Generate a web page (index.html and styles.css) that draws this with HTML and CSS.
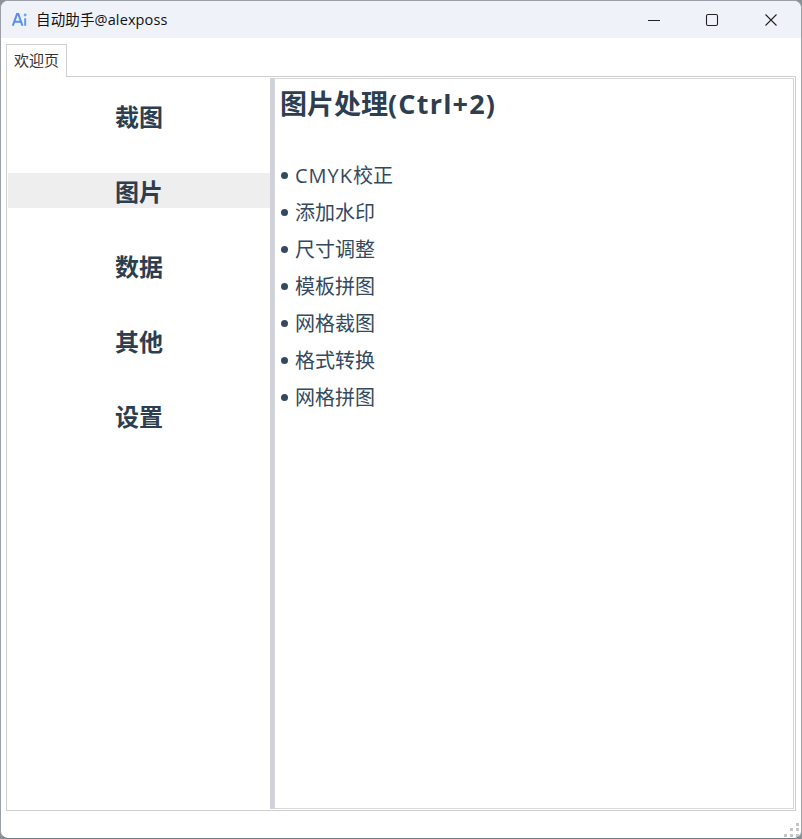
FILE: index.html
```html
<!DOCTYPE html>
<html lang="zh-CN">
<head>
<meta charset="utf-8">
<title>自动助手@alexposs</title>
<link rel="stylesheet" href="styles.css">
</head>
<body>
<div class="window">
  <header class="titlebar">
    <svg class="logo" width="15" height="15" viewBox="0 0 18 18" fill="none">
      <path d="M1 16.5 L6 2.5 L7.6 2.5 L12.6 16.5 M3 11.8 H10.6" stroke="#5b8def" stroke-width="2.4"/>
      <path d="M15.8 7.5 V16.5" stroke="#5b9cf0" stroke-width="2.4"/>
      <circle cx="15.8" cy="3.6" r="1.7" fill="#6aa5f5"/>
    </svg>
    <span class="app-title">自动助手@alexposs</span>
    <div class="controls">
      <button class="ctl"><svg width="14" height="14" viewBox="0 0 14 14"><path d="M1 7.5H13" stroke="#222" stroke-width="1"/></svg></button>
      <button class="ctl"><svg width="14" height="14" viewBox="0 0 14 14" fill="none"><rect x="1.5" y="1.5" width="11" height="11" rx="1.5" stroke="#222" stroke-width="1.1"/></svg></button>
      <button class="ctl"><svg width="14" height="14" viewBox="0 0 14 14"><path d="M1.5 1.5L12.5 12.5M12.5 1.5L1.5 12.5" stroke="#222" stroke-width="1.1"/></svg></button>
    </div>
  </header>
  <div class="tabbar"><div class="tab">欢迎页</div></div>
  <div class="pane">
    <nav class="sidebar">
      <div class="nav-item">裁图</div>
      <div class="nav-item active">图片</div>
      <div class="nav-item">数据</div>
      <div class="nav-item">其他</div>
      <div class="nav-item">设置</div>
    </nav>
    <div class="splitter"></div>
    <main class="content">
      <h1 class="heading">图片处理<span class="wide">(Ctrl+2)</span></h1>
      <ul class="features">
        <li><span><span class="wide-sm">CMYK</span>校正</span></li>
        <li>添加水印</li>
        <li>尺寸调整</li>
        <li>模板拼图</li>
        <li>网格裁图</li>
        <li>格式转换</li>
        <li>网格拼图</li>
      </ul>
    </main>
  </div>
  <div class="statusbar">
    <svg class="grip" width="16" height="16" viewBox="0 0 16 16" fill="#c4c4c4">
      <rect x="12" y="2" width="3" height="3"/>
      <rect x="6" y="7" width="3" height="3"/><rect x="12" y="7" width="3" height="3"/>
      <rect x="0" y="13" width="3" height="3"/><rect x="6" y="13" width="3" height="3"/><rect x="12" y="13" width="3" height="3"/>
    </svg>
  </div>
</div>
</body>
</html>
```
FILE: styles.css
```css
* { box-sizing: border-box; }
html, body { margin: 0; padding: 0; height: 100%; }
body {
  background: #8a9296;
  font-family: "Open Sans", "Noto Sans CJK SC", sans-serif;
  overflow: hidden;
}
.window {
  width: 802px;
  height: 839px;
  display: flex;
  flex-direction: column;
  background: #fff;
  border-radius: 8px;
  border: 1px solid #9aa0a6;
  border-bottom-color: #6d7b80;
  overflow: hidden;
}
.titlebar {
  height: 37px;
  flex: none;
  display: flex;
  align-items: center;
  background: #eff2f8;
  padding-left: 11px;
}
.logo { flex: none; }
.app-title {
  margin-left: 9px;
  padding-bottom: 3px;
  font-size: 14.5px;
  letter-spacing: 0.13px;
  color: #111;
}
.controls { margin-left: auto; display: flex; margin-right: 1px; }
.ctl {
  width: 58.5px;
  height: 37px;
  border: 0;
  padding: 0;
  background: transparent;
  display: flex;
  align-items: center;
  justify-content: center;
}
.tabbar {
  height: 39px;
  flex: none;
  padding: 6px 0 0 5px;
  display: flex;
  position: relative;
  z-index: 1;
}
.tab {
  width: 61px;
  height: 33px;
  border: 1px solid #cfcfcf;
  border-bottom: 0;
  background: #fff;
  font-size: 15px;
  color: #333;
  text-align: center;
  line-height: 30px;
}
.pane {
  margin: -1px 5px 0 5px;
  height: 735px;
  flex: none;
  border: 1px solid #cfcfcf;
  padding: 1px;
  display: flex;
}
.sidebar {
  width: 262px;
  flex: none;
  padding-top: 20px;
  display: flex;
  flex-direction: column;
  gap: 40px;
}
.nav-item {
  height: 35px;
  line-height: 37px;
  text-align: center;
  font-size: 24px;
  font-weight: 700;
  color: #2c3e50;
}
.nav-item.active { background: #eeeeee; }
.splitter { width: 4px; flex: none; background: #cfd2dc; }
.content {
  flex: 1;
  border: 1px solid #d8d8d8;
  padding: 6px 5px;
  color: #2c3e50;
}
.heading {
  margin: 0;
  font-size: 27px;
  font-weight: 700;
  line-height: 38px;
}
.wide { letter-spacing: 1.2px; }
.wide-sm { letter-spacing: 1px; }
.features {
  list-style: none;
  margin: 34px 0 0;
  padding: 0;
}
.features li {
  height: 37px;
  line-height: 37px;
  font-size: 20px;
  color: #34495e;
  display: flex;
  align-items: center;
}
.features li::before {
  content: "";
  width: 7px;
  height: 7px;
  border-radius: 50%;
  background: #34495e;
  margin: 0 7px 0 1px;
}
.statusbar {
  flex: 1;
  position: relative;
}
.grip { position: absolute; right: 1px; bottom: 1px; }
```
